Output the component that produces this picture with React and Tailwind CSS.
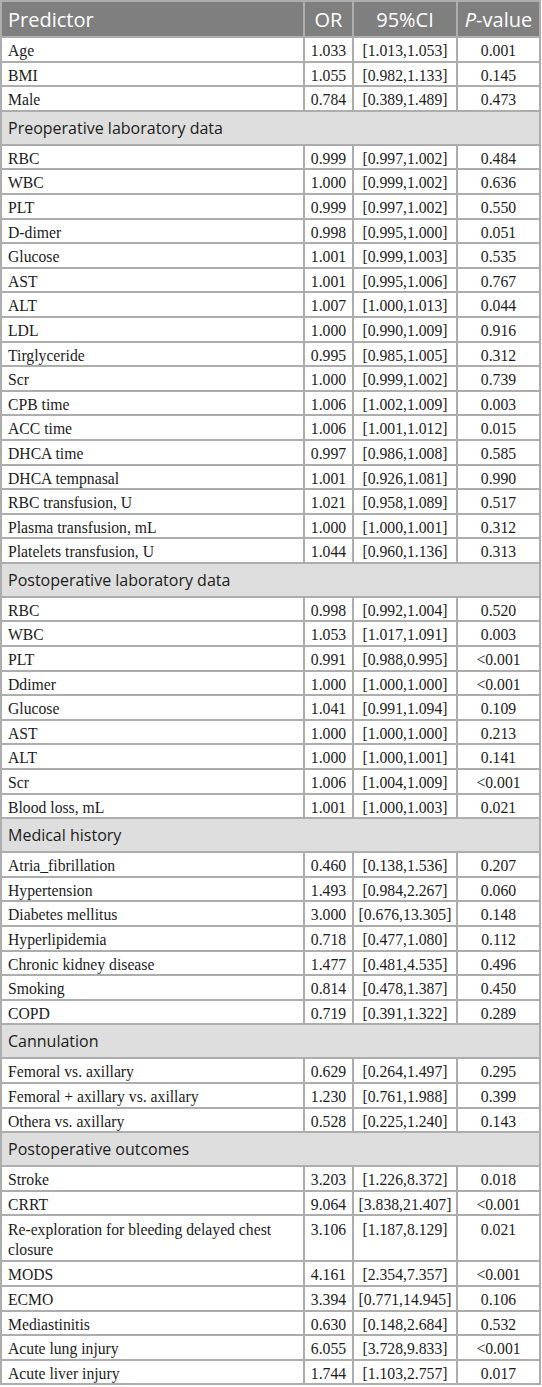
const sections = [
  {
    title: null,
    rows: [
      ["Age", "1.033", "[1.013,1.053]", "0.001"],
      ["BMI", "1.055", "[0.982,1.133]", "0.145"],
      ["Male", "0.784", "[0.389,1.489]", "0.473"],
    ],
  },
  {
    title: "Preoperative laboratory data",
    rows: [
      ["RBC", "0.999", "[0.997,1.002]", "0.484"],
      ["WBC", "1.000", "[0.999,1.002]", "0.636"],
      ["PLT", "0.999", "[0.997,1.002]", "0.550"],
      ["D-dimer", "0.998", "[0.995,1.000]", "0.051"],
      ["Glucose", "1.001", "[0.999,1.003]", "0.535"],
      ["AST", "1.001", "[0.995,1.006]", "0.767"],
      ["ALT", "1.007", "[1.000,1.013]", "0.044"],
      ["LDL", "1.000", "[0.990,1.009]", "0.916"],
      ["Tirglyceride", "0.995", "[0.985,1.005]", "0.312"],
      ["Scr", "1.000", "[0.999,1.002]", "0.739"],
      ["CPB time", "1.006", "[1.002,1.009]", "0.003"],
      ["ACC time", "1.006", "[1.001,1.012]", "0.015"],
      ["DHCA time", "0.997", "[0.986,1.008]", "0.585"],
      ["DHCA tempnasal", "1.001", "[0.926,1.081]", "0.990"],
      ["RBC transfusion, U", "1.021", "[0.958,1.089]", "0.517"],
      ["Plasma transfusion, mL", "1.000", "[1.000,1.001]", "0.312"],
      ["Platelets transfusion, U", "1.044", "[0.960,1.136]", "0.313"],
    ],
  },
  {
    title: "Postoperative laboratory data",
    rows: [
      ["RBC", "0.998", "[0.992,1.004]", "0.520"],
      ["WBC", "1.053", "[1.017,1.091]", "0.003"],
      ["PLT", "0.991", "[0.988,0.995]", "<0.001"],
      ["Ddimer", "1.000", "[1.000,1.000]", "<0.001"],
      ["Glucose", "1.041", "[0.991,1.094]", "0.109"],
      ["AST", "1.000", "[1.000,1.000]", "0.213"],
      ["ALT", "1.000", "[1.000,1.001]", "0.141"],
      ["Scr", "1.006", "[1.004,1.009]", "<0.001"],
      ["Blood loss, mL", "1.001", "[1.000,1.003]", "0.021"],
    ],
  },
  {
    title: "Medical history",
    rows: [
      ["Atria_fibrillation", "0.460", "[0.138,1.536]", "0.207"],
      ["Hypertension", "1.493", "[0.984,2.267]", "0.060"],
      ["Diabetes mellitus", "3.000", "[0.676,13.305]", "0.148"],
      ["Hyperlipidemia", "0.718", "[0.477,1.080]", "0.112"],
      ["Chronic kidney disease", "1.477", "[0.481,4.535]", "0.496"],
      ["Smoking", "0.814", "[0.478,1.387]", "0.450"],
      ["COPD", "0.719", "[0.391,1.322]", "0.289"],
    ],
  },
  {
    title: "Cannulation",
    rows: [
      ["Femoral vs. axillary", "0.629", "[0.264,1.497]", "0.295"],
      ["Femoral + axillary vs. axillary", "1.230", "[0.761,1.988]", "0.399"],
      ["Othera vs. axillary", "0.528", "[0.225,1.240]", "0.143"],
    ],
  },
  {
    title: "Postoperative outcomes",
    rows: [
      ["Stroke", "3.203", "[1.226,8.372]", "0.018"],
      ["CRRT", "9.064", "[3.838,21.407]", "<0.001"],
      ["Re-exploration for bleeding delayed chest closure", "3.106", "[1.187,8.129]", "0.021"],
      ["MODS", "4.161", "[2.354,7.357]", "<0.001"],
      ["ECMO", "3.394", "[0.771,14.945]", "0.106"],
      ["Mediastinitis", "0.630", "[0.148,2.684]", "0.532"],
      ["Acute lung injury", "6.055", "[3.728,9.833]", "<0.001"],
      ["Acute liver injury", "1.744", "[1.103,2.757]", "0.017"],
    ],
  },
];

const sans = "font-['Open_Sans',_'Noto_Sans',_sans-serif]";
const cell = "border-2 border-[#adadad] align-top";

export default function App() {
  return (
    <div className="w-[542px] bg-white">
      <table className="w-[541px] table-fixed border-collapse">
        <colgroup>
          <col className="w-[303px]" />
          <col className="w-[49px]" />
          <col className="w-[104px]" />
          <col />
        </colgroup>
        <thead>
          <tr className={`h-[36px] bg-[#7f7f7f] text-[20px] leading-[26px] text-white ${sans}`}>
            <th className={`${cell} pl-[6px] pt-[5px] text-left font-normal`}>Predictor</th>
            <th className={`${cell} pt-[5px] text-center font-normal`}>OR</th>
            <th className={`${cell} pt-[5px] text-center font-normal`}>95%CI</th>
            <th className={`${cell} pt-[5px] text-center font-normal`}>
              <span className="italic">P</span>-value
            </th>
          </tr>
        </thead>
        <tbody className="font-['Liberation_Serif',_serif] text-[15.7px] text-[#1c1c1c]">
          {sections.map((sec, i) => (
            <Section key={i} sec={sec} />
          ))}
        </tbody>
      </table>
    </div>
  );
}

function Section({ sec }) {
  return (
    <>
      {sec.title ? (
        <tr className="h-[34px] bg-[#dedede]">
          <td colSpan={4} className={`${cell} pl-[6px] pt-[5px] text-[16px] leading-[22px] text-[#1c1c1c] ${sans}`}>
            {sec.title}
          </td>
        </tr>
      ) : null}
      {sec.rows.map((r, j) => {
        const tall = r[0].length > 40;
        return (
          <tr key={j} className={tall ? "h-[43px] leading-[20px]" : "h-[24.6px] leading-[18px]"}>
            <td className={`${cell} pl-[6px] pr-[10px] pt-[4px]`}>{r[0]}</td>
            <td className={`${cell} pt-[4px] text-center`}>{r[1]}</td>
            <td className={`${cell} pt-[4px] text-center`}>{r[2]}</td>
            <td className={`${cell} pt-[4px] text-center`}>{r[3]}</td>
          </tr>
        );
      })}
    </>
  );
}
